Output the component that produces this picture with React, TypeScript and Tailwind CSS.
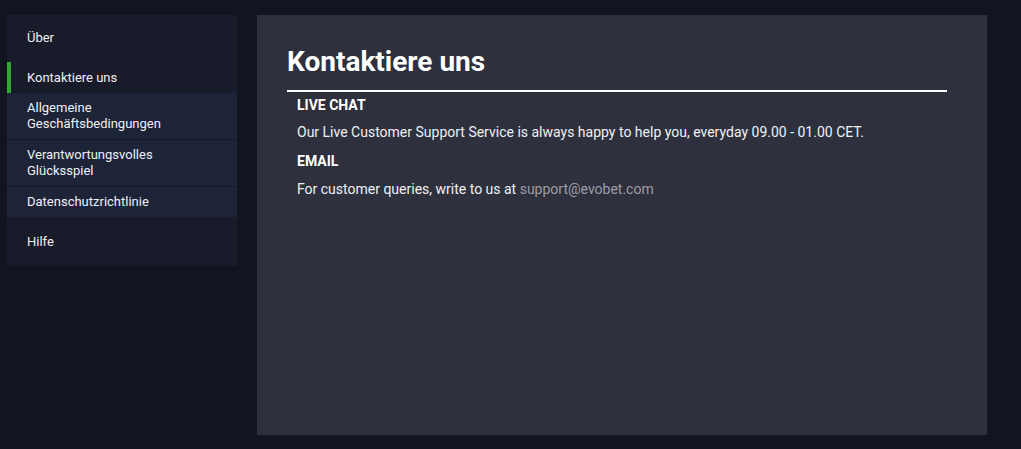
import React from "react";

export default function App() {
  const font = { fontFamily: "Roboto, 'Liberation Sans', sans-serif" };
  return (
    <div style={font} className="w-[1021px] h-[449px] bg-[#11151f] flex items-start gap-[20px] pl-[7px] pt-[15px] text-[#eef0f3]">
      <div className="w-[230px] bg-[#171b2a] text-[13px] font-normal leading-[16px] flex flex-col">
        <div className="h-[47px] pl-[20px] pt-[15px]">Über</div>
        <div className="h-[31px] pl-[16px] flex items-center border-l-[4px] border-[#2ea82e]">Kontaktiere uns</div>
        <div className="h-[47px] pl-[20px] flex items-center bg-[#1d2437] border-b border-[#161a28]">
          <span>Allgemeine<br />Geschäftsbedingungen</span>
        </div>
        <div className="h-[47px] pl-[20px] flex items-center bg-[#1d2437] border-b border-[#161a28]">
          <span>Verantwortungsvolles<br />Glücksspiel</span>
        </div>
        <div className="h-[30px] pl-[20px] flex items-center bg-[#1d2437]">Datenschutzrichtlinie</div>
        <div className="h-[49px] pl-[20px] flex items-center">Hilfe</div>
      </div>
      <div className="w-[730px] h-[420px] bg-[#2e313d] pl-[30px] pr-[40px] pt-[30px]">
        <div className="border-b-2 border-white pb-[12px]">
          <h1 className="text-[28px] font-bold leading-[33px] text-white">Kontaktiere uns</h1>
        </div>
        <div className="pl-[10px] text-[14px] font-normal">
          <div className="leading-[26px] font-bold text-white">LIVE CHAT</div>
          <div className="leading-[29px]">Our Live Customer Support Service is always happy to help you, everyday 09.00 - 01.00 CET.</div>
          <div className="leading-[28px] font-bold text-white">EMAIL</div>
          <div className="leading-[28px]">
            For customer queries, write to us at <span className="text-[#9b9da5]">support@evobet.com</span>
          </div>
        </div>
      </div>
    </div>
  );
}
